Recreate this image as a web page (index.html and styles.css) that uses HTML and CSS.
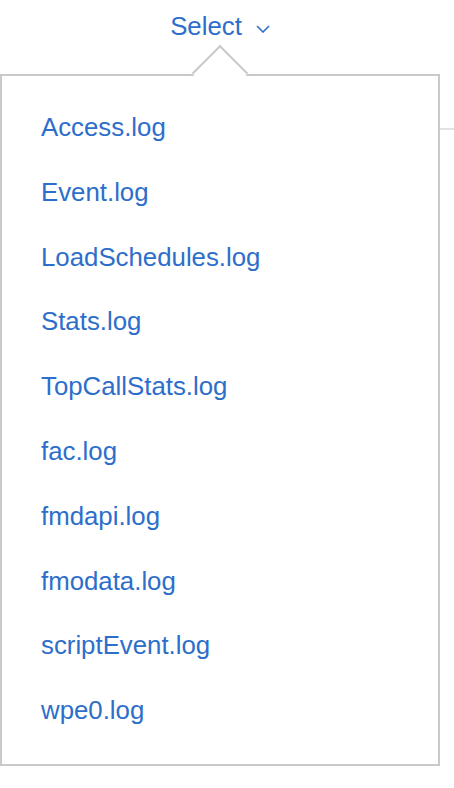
FILE: index.html
```html
<!DOCTYPE html>
<html lang="en">
<head>
    <meta charset="UTF-8">
    <meta name="viewport" content="width=device-width, initial-scale=1.0">
    <title>Log files</title>
    <link rel="stylesheet" href="styles.css">
</head>
<body>

    <div class="page-head"></div>

    <!-- Log file picker, opened -->
    <div class="dropdown">
        <div class="dropdown-label">
            Select<svg class="chevron" width="14" height="8" viewBox="0 0 14 8"><polyline points="1,1 7,7 13,1" fill="none" stroke="#2d6ecb" stroke-width="1.6"/></svg>
        </div>
        <ul class="menu">
            <li><a href="#">Access.log</a></li>
            <li><a href="#">Event.log</a></li>
            <li><a href="#">LoadSchedules.log</a></li>
            <li><a href="#">Stats.log</a></li>
            <li><a href="#">TopCallStats.log</a></li>
            <li><a href="#">fac.log</a></li>
            <li><a href="#">fmdapi.log</a></li>
            <li><a href="#">fmodata.log</a></li>
            <li><a href="#">scriptEvent.log</a></li>
            <li><a href="#">wpe0.log</a></li>
        </ul>
    </div>

</body>
</html>
```

FILE: styles.css
```css
body { margin: 0; font-family: "Liberation Sans", Arial, sans-serif; background: #fff; }
a { color: #2d6ecb; text-decoration: none; }

.page-head { height: 128px; border-bottom: 2px solid #e2e2e2; }

.dropdown { position: absolute; top: 0; left: 0; width: 440px; }
.dropdown-label {
    padding-top: 11px;
    text-align: center;
    font-size: 25.8px;
    line-height: 30px;
    color: #2d6ecb;
}
.chevron { margin-left: 14px; vertical-align: 2px; }

.menu {
    position: relative;
    box-sizing: border-box;
    height: 692px;
    margin: 33px 0 0;
    padding: 19px 0 0 39px;
    list-style: none;
    background: #fff;
    border: 2px solid #c9c9c9;
}
/* caret pointing up at the label */
.menu::before {
    content: "";
    position: absolute;
    top: -23px;
    left: 50%;
    width: 40px;
    height: 40px;
    margin-left: -20px;
    box-sizing: border-box;
    background: #fff;
    border-top: 2px solid #c9c9c9;
    border-left: 2px solid #c9c9c9;
    transform: rotate(45deg);
}
.menu li { font-size: 25.8px; line-height: 64.8px; }
```
